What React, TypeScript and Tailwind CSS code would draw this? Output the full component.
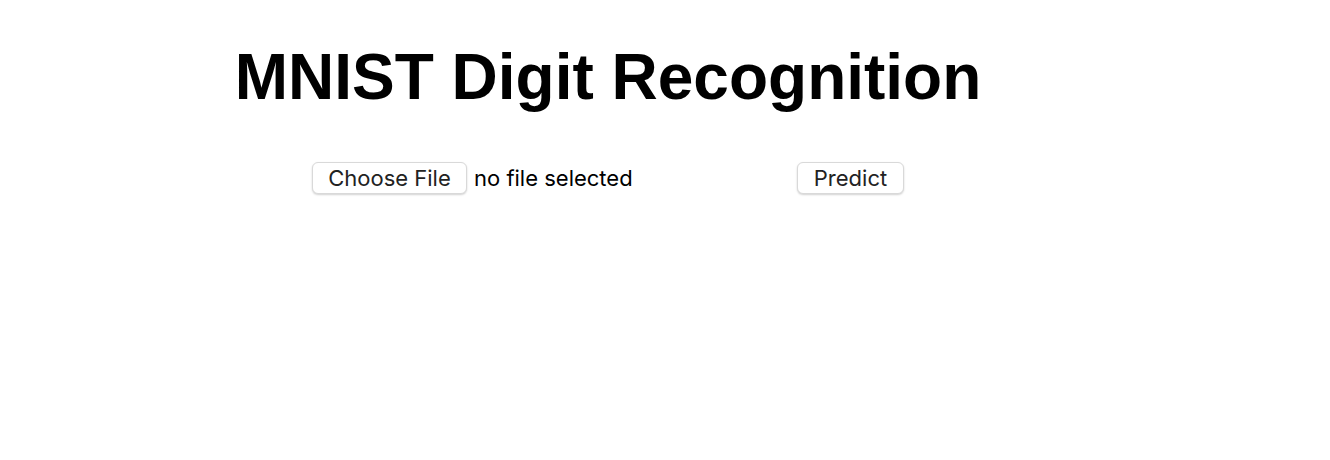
const App: React.FC = () => {
  return (
    <div className="min-h-[460px] bg-white">
      <div className="w-[1216px] flex flex-col items-center">
        <h1 className="mt-[41px] text-[64px] leading-[72px] font-bold text-black font-['Liberation_Sans',Arial,sans-serif]">
          MNIST Digit Recognition
        </h1>
        <div className="mt-[49px] flex items-center gap-[163px] font-['Inter','Noto_Sans',sans-serif] text-[22px] leading-[28px]">
          <div className="flex items-center w-[322px]">
            <button className="h-[32px] w-[155px] rounded-[6px] border border-[#d9d9d9] bg-white text-[#222] shadow-[0_1px_2px_rgba(0,0,0,0.18)]">
              Choose File
            </button>
            <span className="ml-[7px] text-black">no file selected</span>
          </div>
          <button className="h-[32px] w-[107px] rounded-[6px] border border-[#d9d9d9] bg-white text-[#222] shadow-[0_1px_2px_rgba(0,0,0,0.18)]">
            Predict
          </button>
        </div>
      </div>
    </div>
  );
};

export default App;
